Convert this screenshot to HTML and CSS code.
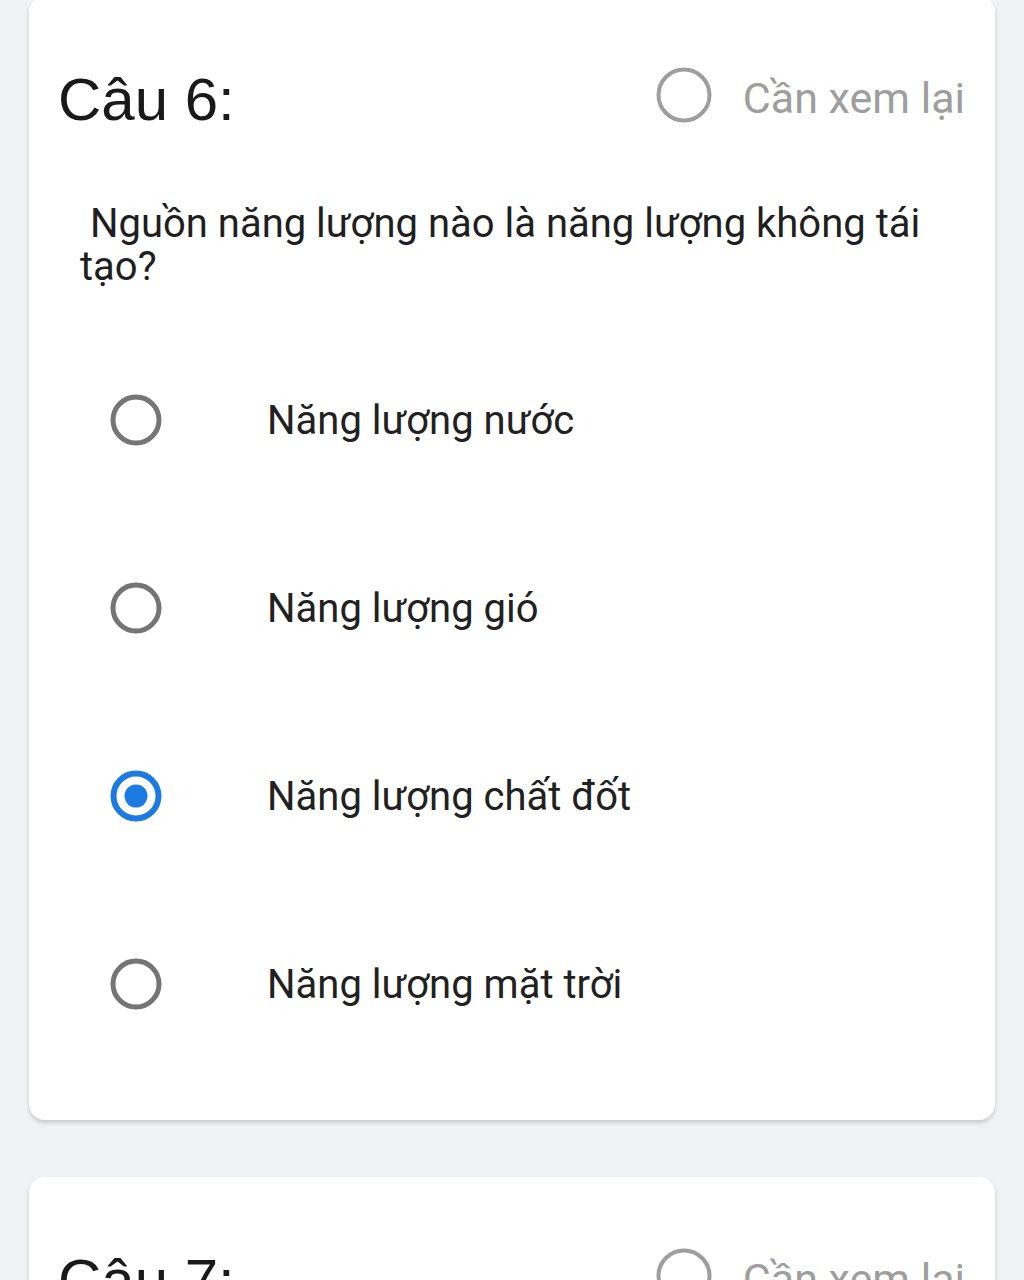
FILE: index.html
```html
<!DOCTYPE html>
<html>

<head>
    <meta charset="utf-8">
    <title>Câu hỏi</title>
    <link rel="stylesheet" href="styles.css">
</head>

<body>
    <div class="page">
        <div class="card first">
            <div class="card-head">
                <span class="title">Câu 6:</span>
                <label class="review">
                    <svg class="review-radio" viewBox="0 0 56 56"><circle cx="28" cy="28" r="25.5" fill="none" stroke="#9e9e9e" stroke-width="4"/></svg>
                    <span class="review-text">Cần xem lại</span>
                </label>
            </div>
            <div class="question">&nbsp;Nguồn năng lượng nào là năng lượng không tái tạo?</div>
            <div class="options">
                <div class="option">
                    <svg class="radio" viewBox="0 0 52 52"><circle cx="26" cy="26" r="23" fill="none" stroke="#757575" stroke-width="5"/></svg>
                    <span>Năng lượng nước</span>
                </div>
                <div class="option">
                    <svg class="radio" viewBox="0 0 52 52"><circle cx="26" cy="26" r="23" fill="none" stroke="#757575" stroke-width="5"/></svg>
                    <span>Năng lượng gió</span>
                </div>
                <div class="option">
                    <svg class="radio" viewBox="0 0 52 52"><circle cx="26" cy="26" r="22.5" fill="none" stroke="#1b7be0" stroke-width="6"/><circle cx="26" cy="26" r="11.5" fill="#1b7be0"/></svg>
                    <span>Năng lượng chất đốt</span>
                </div>
                <div class="option">
                    <svg class="radio" viewBox="0 0 52 52"><circle cx="26" cy="26" r="23" fill="none" stroke="#757575" stroke-width="5"/></svg>
                    <span>Năng lượng mặt trời</span>
                </div>
            </div>
        </div>

        <div class="card">
            <div class="card-head">
                <span class="title">Câu 7:</span>
                <label class="review">
                    <svg class="review-radio" viewBox="0 0 56 56"><circle cx="28" cy="28" r="25.5" fill="none" stroke="#9e9e9e" stroke-width="4"/></svg>
                    <span class="review-text">Cần xem lại</span>
                </label>
            </div>
        </div>
    </div>
</body>

</html>
```

FILE: styles.css
```css
html, body {
    background: #f1f2f4;
}

body {
    margin: 0;
    padding: 0;
    font-family: Roboto, "Noto Sans", sans-serif;
}

.page {
    padding: 0 29px;
}

.card {
    background: #ffffff;
    border-radius: 16px;
    box-shadow: 0 3px 4px rgba(0, 0, 0, 0.16);
    padding: 72px 30px 42px 29px;
    margin-top: 57px;
}

.card.first {
    margin-top: -4px;
}

.card-head {
    display: flex;
    justify-content: space-between;
    align-items: flex-start;
}

.title {
    font-family: "Liberation Sans", Arial, sans-serif;
    font-size: 60px;
    line-height: 64px;
    color: #1a1a1a;
}

.review {
    display: flex;
    align-items: center;
    gap: 31px;
    margin-top: -2px;
    font-size: 43px;
    color: #9e9e9e;
}

.review-text {
    padding-top: 7px;
}

.review-radio {
    width: 56px;
    height: 56px;
}

.question {
    margin: 70px 0 0 22px;
    font-size: 40px;
    line-height: 43px;
    color: #1f1f1f;
}

.options {
    margin: 38px 0 0 52px;
}

.option {
    display: flex;
    align-items: center;
    gap: 105px;
    height: 188px;
    font-size: 40px;
    color: #212121;
}

.radio {
    width: 52px;
    height: 52px;
    flex-shrink: 0;
}
```
